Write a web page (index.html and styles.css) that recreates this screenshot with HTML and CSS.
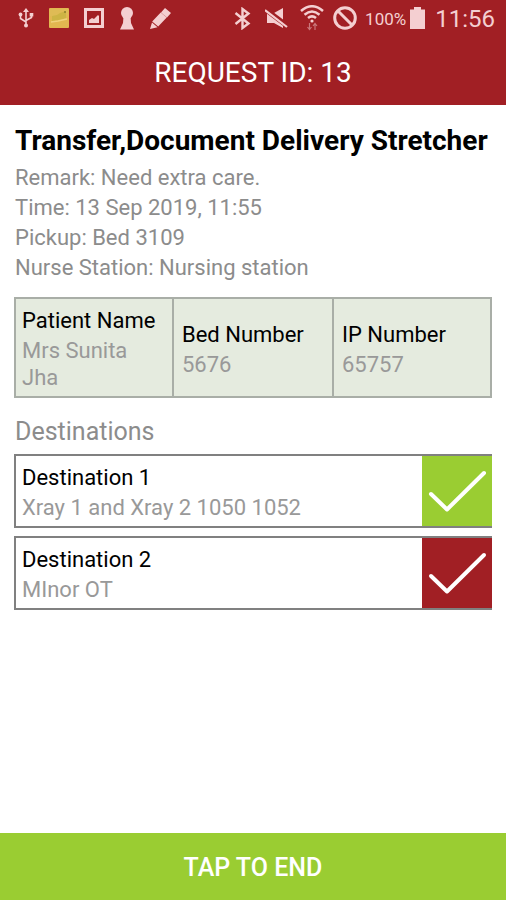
FILE: index.html
```html
<!DOCTYPE html>
<html lang="en">
<head>
<meta charset="utf-8">
<meta name="viewport" content="width=device-width, initial-scale=1">
<title>Request ID: 13</title>
<link rel="stylesheet" href="styles.css">
</head>
<body>
<header class="top">
  <div class="status">
    <div class="status-left">
      <svg width="16" height="20" viewBox="0 0 16 20" fill="none" stroke="currentColor" stroke-width="1.6"><path d="M8 3v14M2.5 7v3.5L8 14M13.5 7v2.5L8 12.500"/><path d="M8 0l3 4H5z" fill="currentColor" stroke="none"/><circle cx="8" cy="17.500" r="2" fill="currentColor" stroke="none"/><circle cx="2.500" cy="6.500" r="1.900" fill="currentColor" stroke="none"/><path d="M11.700 5h3.600v3.600h-3.600z" fill="currentColor" stroke="none"/></svg>
      <svg width="20" height="20" viewBox="0 0 20 20"><rect width="20" height="20" rx="1" fill="#e2b750"/><path d="M1 1h18v6L9 9 1 8z" fill="#dfbb55"/><path d="M3 8l5-1 3-2 6-2v7l-6 2-8 1z" fill="#cdb444"/><path d="M2 14l7-1 9-2" stroke="#f0d27c" stroke-width="1.500" fill="none"/><circle cx="16" cy="4" r="1" fill="#8f7b2b"/></svg>
      <svg width="20" height="20" viewBox="0 0 20 20"><path d="M1.500 1.500h17v17h-17z" fill="none" stroke="currentColor" stroke-width="3"/><path d="M5 15v-3l3-2 2 1 4-4 1 1v7z" fill="currentColor"/></svg>
      <svg width="16" height="23" viewBox="0 0 16 23" fill="currentColor"><circle cx="8" cy="6" r="6"/><path d="M4.500 9h7L12 16l3 6.500H1L4 16z"/></svg>
      <svg width="22" height="22" viewBox="0 0 22 22" fill="currentColor"><path d="M15 1l6 5-4 4.500-6-5zM10.700 5.500l6 5-8.500 9-6-5zM2 15.500l5.500 4.700L0 22z"/></svg>
    </div>
    <div class="status-right">
      <svg width="17" height="23" viewBox="0 0 17 23" fill="none" stroke="currentColor" stroke-width="2.400"><path d="M1.500 6l13 10.500-6 4.500V2l6 4.500-13 10.500"/></svg>
      <svg class="mute" width="23" height="22" viewBox="0 0 23 22"><path d="M2 6h7l9-5v20l-9-5H2z" fill="currentColor"/><path d="M0 2l23 17.500" stroke="#a11f24" stroke-width="5"/><path d="M0 3l22 17" stroke="currentColor" stroke-width="2.200"/></svg>
      <svg class="wifi" width="24" height="26" viewBox="0 0 24 26" fill="none" stroke="currentColor" stroke-width="2.500"><path d="M1 6q11-9.500 22 0M4.500 9.700q7.500-6.500 15 0M8 13q4-3.300 8 0"/><circle cx="12" cy="16" r="1.600" fill="currentColor" stroke="none"/><path d="M9.500 18v6M7.500 22l2 2.500 2-2.500M15 25v-6M13 21l2-2.500 2 2.500" stroke-width="1.200" opacity=".5"/></svg>
      <svg class="block" width="24" height="24" viewBox="0 0 24 24" fill="none" stroke="currentColor" stroke-width="3"><circle cx="12" cy="12" r="10.300"/><path d="M5 5l14 14"/></svg>
      <span class="percent">100%</span>
      <svg width="15" height="22" viewBox="0 0 15 22" fill="currentColor"><path d="M4 0h7v2.500h4V22H0V2.500h4z"/></svg>
      <time class="clock">11:56</time>
    </div>
  </div>
  <h1 class="screen-title">REQUEST ID: 13</h1>
</header>
<main class="content">
  <h2 class="task">Transfer,Document Delivery Stretcher</h2>
  <div class="info">
    <p>Remark: Need extra care.</p>
    <p>Time: 13 Sep 2019, 11:55</p>
    <p>Pickup: Bed 3109</p>
    <p>Nurse Station: Nursing station</p>
  </div>
  <dl class="patient">
    <div class="cell"><dt class="label">Patient Name</dt><dd class="value">Mrs Sunita Jha</dd></div>
    <div class="cell"><dt class="label">Bed Number</dt><dd class="value">5676</dd></div>
    <div class="cell"><dt class="label">IP Number</dt><dd class="value">65757</dd></div>
  </dl>
  <h3 class="section">Destinations</h3>
  <ul class="stops">
    <li class="stop">
      <div class="stop-text"><p class="label">Destination 1</p><p class="value">Xray 1 and Xray 2 1050 1052</p></div>
      <button class="check done" type="button" aria-label="Destination 1 completed"><svg width="70" height="70" viewBox="0 0 70 70"><path d="M9 38l16 15.500L62 17"/></svg></button>
    </li>
    <li class="stop">
      <div class="stop-text"><p class="label">Destination 2</p><p class="value">MInor OT</p></div>
      <button class="check" type="button" aria-label="Complete destination 2"><svg width="70" height="70" viewBox="0 0 70 70"><path d="M9 38l16 15.500L62 17"/></svg></button>
    </li>
  </ul>
</main>
<button class="end" type="button">TAP TO END</button>
</body>
</html>
```
FILE: styles.css
```css
* {
  box-sizing: border-box;
  margin: 0;
  padding: 0;
}

body {
  min-height: 100vh;
  display: flex;
  flex-direction: column;
  background: #fff;
  color: #000;
  font-family: Roboto, "Liberation Sans", sans-serif;
  font-size: 22px;
  line-height: 27px;
}

svg {
  display: block;
  flex: none;
}

.top {
  background: #a11f24;
  color: #fff;
}

.status {
  height: 40px;
  padding: 0 11px 4px 18px;
  display: flex;
  justify-content: space-between;
  align-items: center;
  color: #f4cfd1;
}

.status-left,
.status-right {
  display: flex;
  align-items: center;
}

.status-left {
  gap: 15px;
}

.mute {
  margin-left: 14px;
}

.wifi {
  margin-left: 12px;
}

.block {
  margin-left: 9px;
}

.percent {
  margin: 2px 4px 0 8px;
  font-size: 17px;
}

.clock {
  margin: 2px 0 0 10px;
  font-size: 24px;
}

.screen-title {
  padding: 16px;
  font-size: 28px;
  font-weight: 400;
  line-height: 33px;
  text-align: center;
}

.content {
  flex: 1;
  padding: 19px 14px;
}

.task {
  margin-bottom: 6px;
  padding-left: 1px;
  font-size: 28px;
  font-weight: 700;
  line-height: 33px;
}

.info {
  padding-left: 1px;
  color: #8c8c8c;
  line-height: 30px;
}

.patient {
  margin: 14px 0 19px;
  display: grid;
  grid-template-columns: 156fr 160fr 158fr;
  border: 2px solid #a9aea7;
  background: #e5ebdf;
}

.cell {
  padding: 8px 10px 5px 6px;
  display: flex;
  flex-direction: column;
  justify-content: center;
}

.cell + .cell {
  padding-left: 8px;
  border-left: 2px solid #a9aea7;
}

.label {
  margin-bottom: 3px;
}

.value {
  color: #999;
}

.section {
  padding-left: 1px;
  color: #8c8c8c;
  font-size: 25px;
  font-weight: 400;
  line-height: 29px;
}

.stops {
  margin-top: 8px;
  display: grid;
  gap: 8px;
  list-style: none;
}

.stop {
  display: flex;
  border: 2px solid #808080;
  border-right: 0;
}

.stop-text {
  flex: 1;
  padding: 8px 6px 5px;
}

.check {
  width: 70px;
  display: grid;
  place-items: center;
  border: 0;
  background: #a11f24;
}

.check.done {
  background: #9acd32;
}

.check path {
  fill: none;
  stroke: #fff;
  stroke-width: 4;
  stroke-linecap: round;
  stroke-linejoin: round;
}

.end {
  height: 67px;
  padding-top: 2px;
  border: 0;
  background: #9acd32;
  color: #fff;
  font: 500 25px/30px Roboto, "Liberation Sans", sans-serif;
}
```
